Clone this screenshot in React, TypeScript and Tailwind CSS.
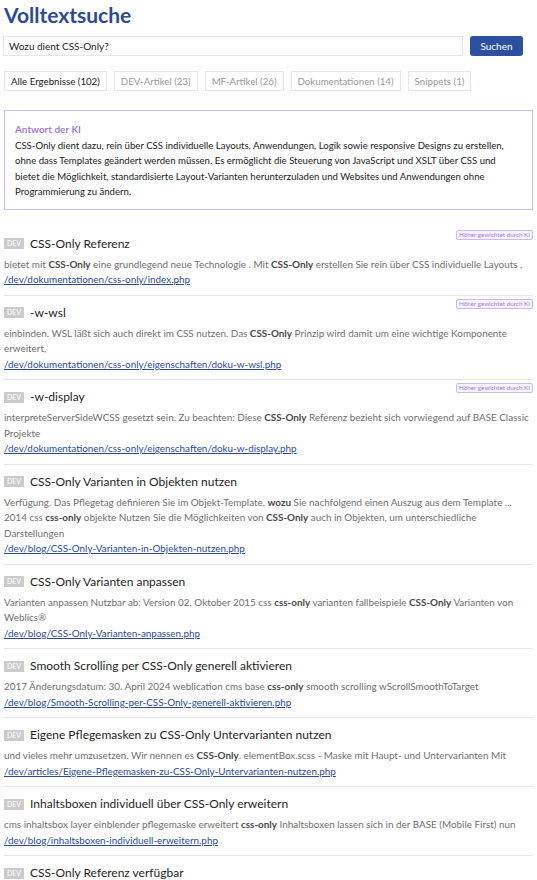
const tabs = [
  { label: "Alle Ergebnisse (102)", active: true },
  { label: "DEV-Artikel (23)" },
  { label: "MF-Artikel (26)" },
  { label: "Dokumentationen (14)" },
  { label: "Snippets (1)" },
];

const results = [
  {
    ki: true,
    title: "CSS-Only Referenz",
    text: "bietet mit **CSS-Only** eine grundlegend neue Technologie . Mit **CSS-Only** erstellen Sie rein über CSS individuelle Layouts ,",
    url: "/dev/dokumentationen/css-only/index.php",
  },
  {
    ki: true,
    title: "-w-wsl",
    text: "einbinden. WSL läßt sich auch direkt im CSS nutzen. Das **CSS-Only** Prinzip wird damit um eine wichtige Komponente erweitert,",
    url: "/dev/dokumentationen/css-only/eigenschaften/doku-w-wsl.php",
  },
  {
    ki: true,
    title: "-w-display",
    text: "interpreteServerSideWCSS gesetzt sein. Zu beachten: Diese **CSS-Only** Referenz bezieht sich vorwiegend auf BASE Classic Projekte",
    url: "/dev/dokumentationen/css-only/eigenschaften/doku-w-display.php",
  },
  {
    title: "CSS-Only Varianten in Objekten nutzen",
    text: "Verfügung. Das Pflegetag definieren Sie im Objekt-Template, **wozu** Sie nachfolgend einen Auszug aus dem Template ... 2014 css **css-only** objekte Nutzen Sie die Möglichkeiten von **CSS-Only** auch in Objekten, um unterschiedliche Darstellungen",
    url: "/dev/blog/CSS-Only-Varianten-in-Objekten-nutzen.php",
  },
  {
    title: "CSS-Only Varianten anpassen",
    text: "Varianten anpassen Nutzbar ab: Version 02. Oktober 2015 css **css-only** varianten fallbeispiele **CSS-Only** Varianten von Weblics®",
    url: "/dev/blog/CSS-Only-Varianten-anpassen.php",
  },
  {
    title: "Smooth Scrolling per CSS-Only generell aktivieren",
    text: "2017 Änderungsdatum: 30. April 2024 weblication cms base **css-only** smooth scrolling wScrollSmoothToTarget",
    url: "/dev/blog/Smooth-Scrolling-per-CSS-Only-generell-aktivieren.php",
  },
  {
    title: "Eigene Pflegemasken zu CSS-Only Untervarianten nutzen",
    text: "und vieles mehr umzusetzen. Wir nennen es **CSS-Only**. elementBox.scss - Maske mit Haupt- und Untervarianten Mit",
    url: "/dev/articles/Eigene-Pflegemasken-zu-CSS-Only-Untervarianten-nutzen.php",
  },
  {
    title: "Inhaltsboxen individuell über CSS-Only erweitern",
    text: "cms inhaltsbox layer einblender pflegemaske erweitert **css-only** Inhaltsboxen lassen sich in der BASE (Mobile First) nun",
    url: "/dev/blog/inhaltsboxen-individuell-erweitern.php",
  },
  {
    title: "CSS-Only Referenz verfügbar",
    text: "Ab sofort steht die **CSS-Only** Referenz zur Verfügung.",
    url: "/dev/blog/CSS-Only-Referenz-verfuegbar.php",
  },
];

function Snippet({ text }: { text: string }) {
  // **bold** parts come from the search highlighter
  const parts = text.split("**");
  return (
    <p className="mt-[4px] text-[9.9px] leading-[15.5px] text-[#707070]">
      {parts.map((p, i) =>
        i % 2 ? (
          <b key={i} className="font-bold text-[#4a4a4a]">
            {p}
          </b>
        ) : (
          <span key={i}>{p}</span>
        )
      )}
    </p>
  );
}

export default function App() {
  return (
    <div className="min-h-[880px] bg-white px-[4px] font-['Lato',sans-serif] text-[#222]">
      <h1 className="pt-[1px] text-[21px] font-bold leading-[28px] text-[#2c4a99]">Volltextsuche</h1>

      <div className="-ml-[1px] mt-[7px] flex items-center gap-[7px] pr-[10px]">
        <div className="flex h-[20px] flex-1 items-center border border-[#e6e6e6] px-[5px] text-[10px] text-[#222]">
          Wozu dient CSS-Only?
        </div>
        <button className="h-[20px] w-[53px] rounded-[3px] bg-[#2d4f9f] text-[10px] text-white">Suchen</button>
      </div>

      <div className="mt-[15px] flex gap-[7px]">
        {tabs.map((t) => (
          <span
            key={t.label}
            className={
              "flex h-[20px] items-center border border-[#e6e6e6] px-[6px] text-[9.7px] " +
              (t.active ? "text-[#222]" : "text-[#9a9a9a]")
            }
          >
            {t.label}
          </span>
        ))}
      </div>

      <div className="mt-[19px] border border-[#cdb8f2] px-[10px] pb-[9px] pt-[11px]">
        <div className="text-[10px] font-semibold leading-[15.5px] text-[#9d6fe0]">Antwort der KI</div>
        <p className="text-[9.6px] leading-[15.5px] text-[#222]">
          CSS-Only dient dazu, rein über CSS individuelle Layouts, Anwendungen, Logik sowie responsive Designs zu
          erstellen, ohne dass Templates geändert werden müssen. Es ermöglicht die Steuerung von JavaScript und XSLT über
          CSS und bietet die Möglichkeit, standardisierte Layout-Varianten herunterzuladen und Websites und Anwendungen
          ohne Programmierung zu ändern.
        </p>
      </div>

      <div className="mt-[17px]">
        {results.map((r, i) => (
          <div key={i} className="relative border-b border-[#e8e8e8] pb-[7px] pt-[8px]">
            {r.ki && (
              <span className="absolute right-0 top-[3px] rounded-[2px] border border-[#cdb8f2] bg-[#f8f4ff] px-[2px] text-[6.3px] leading-[8px] text-[#a47fe4]">
                Höher gewichtet durch KI
              </span>
            )}
            <div className="flex h-[18px] items-center gap-[6px]">
              <span className="flex h-[11px] w-[20px] items-center justify-center bg-[#cbcbcb] text-[7px] text-white">
                DEV
              </span>
              <span className="text-[12px] text-[#1e1e1e]">{r.title}</span>
            </div>
            <Snippet text={r.text} />
            <a href="#" className="block text-[9.9px] leading-[15.5px] text-[#2c4a99] underline">
              {r.url}
            </a>
          </div>
        ))}
      </div>
    </div>
  );
}
